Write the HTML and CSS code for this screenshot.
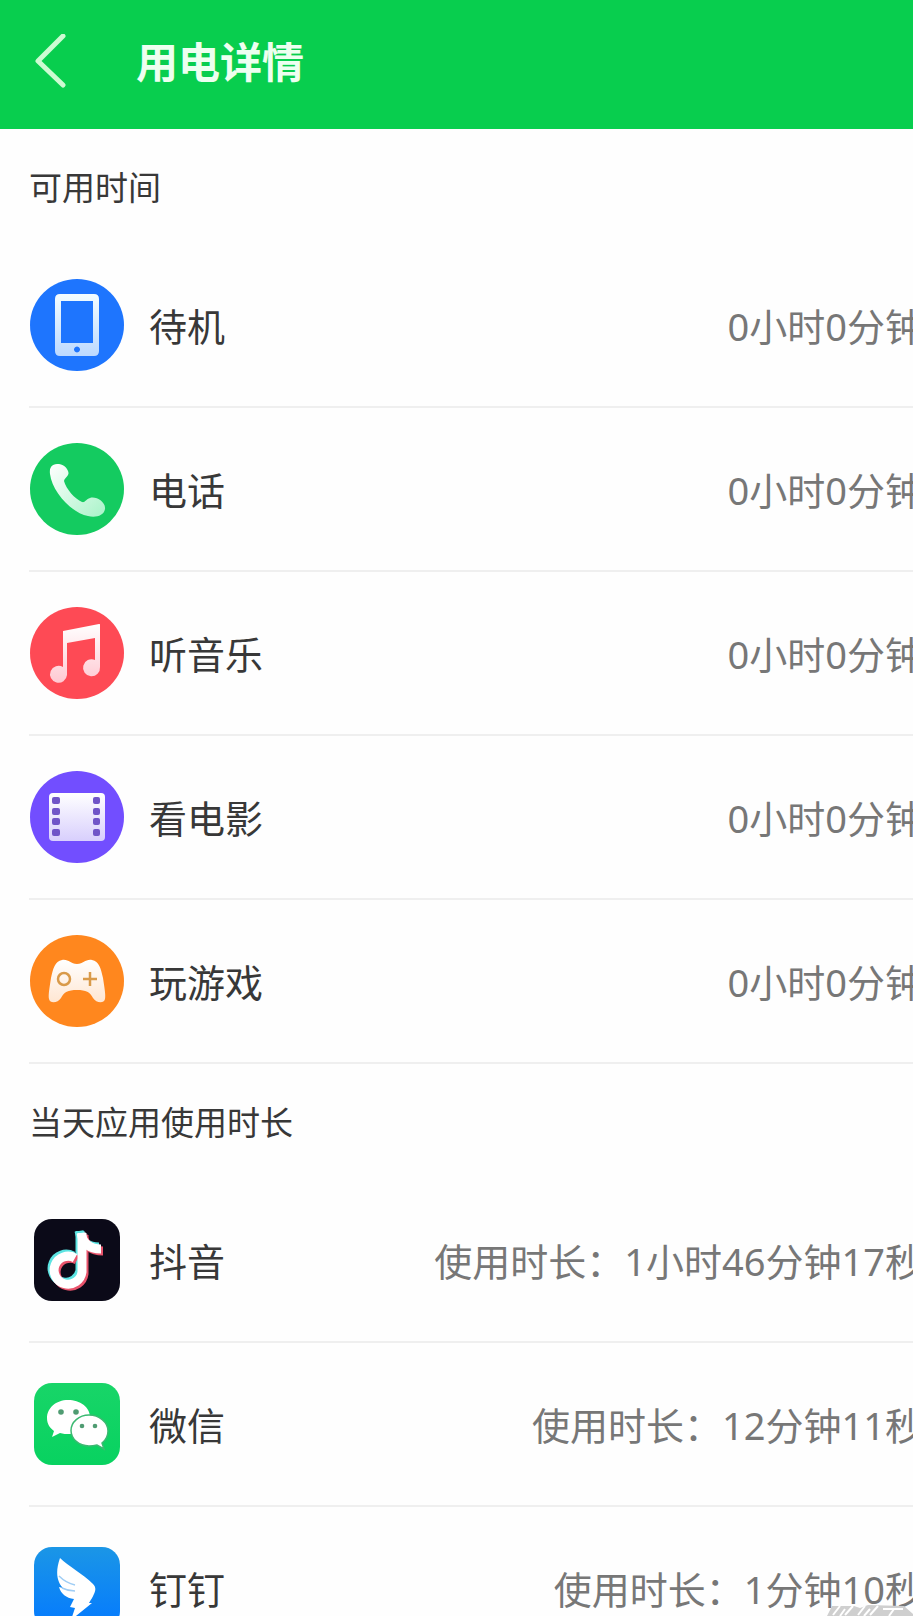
FILE: index.html
```html
<!DOCTYPE html>
<html lang="zh-CN">
<head>
<meta charset="utf-8">
<meta name="viewport" content="width=device-width, initial-scale=1">
<title>用电详情</title>
<link rel="stylesheet" href="styles.css">
</head>
<body>
<header class="topbar">
  <button class="back" type="button" aria-label="返回">
    <svg class="back-icon" viewBox="0 0 32 56" aria-hidden="true"><path d="M29 2 4 27 29 51"/></svg>
  </button>
  <h1 class="title">用电详情</h1>
</header>
<main class="content">
  <section>
    <h2 class="section-title">可用时间</h2>
    <ul class="list">
      <li class="row">
        <svg class="icon" viewBox="0 0 96 96" aria-hidden="true">
          <defs><linearGradient id="g-phone" x1="0" y1="0" x2="0" y2="1"><stop offset="0" stop-color="#f4fdff"/><stop offset="1" stop-color="#bcd9ff"/></linearGradient></defs>
          <ellipse cx="48" cy="48" rx="47" ry="46" fill="#1e75fe"/>
          <path fill="url(#g-phone)" fill-rule="evenodd" d="M31 17h34q5 0 5 5v52q0 5-5 5H31q-5 0-5-5V22q0-5 5-5zM32 24v42h32V24zM48 69.500a3 3 0 1 0 .01 0z"/>
        </svg>
        <span class="name">待机</span><span class="value">0小时0分钟</span>
      </li>
      <li class="row">
        <svg class="icon" viewBox="0 0 96 96" aria-hidden="true">
          <defs><linearGradient id="g-call" x1="0" y1="0" x2="1" y2="1"><stop offset="0" stop-color="#fff"/><stop offset="1" stop-color="#a8f3c8"/></linearGradient></defs>
          <ellipse cx="48" cy="48" rx="47" ry="46" fill="#14cb60"/>
          <path fill="url(#g-call)" d="M21 33C20 25 24 23 30 23c7 1 11 8 9 11-1 2-4 4-4 6 2 8 11 18 18 21 3 1 4-3 8-4 6-2 16 4 15 11-1 7-10 9-17 7C42 72 23 50 21 33z"/>
        </svg>
        <span class="name">电话</span><span class="value">0小时0分钟</span>
      </li>
      <li class="row">
        <svg class="icon" viewBox="0 0 96 96" aria-hidden="true">
          <defs><linearGradient id="g-music" x1="0" y1="0" x2="0" y2="1"><stop offset="0" stop-color="#fff"/><stop offset="1" stop-color="#ffc9d2"/></linearGradient></defs>
          <ellipse cx="48" cy="48" rx="47" ry="46" fill="#fe4a55"/>
          <path fill="url(#g-music)" d="M34 26 70 19c1 0 1 0 1 1v42a8.500 8.500 0 1 1-5-7V33l-28 5v32a8.500 8.500 0 1 1-4-8z"/>
        </svg>
        <span class="name">听音乐</span><span class="value">0小时0分钟</span>
      </li>
      <li class="row">
        <svg class="icon" viewBox="0 0 96 96" aria-hidden="true">
          <defs><linearGradient id="g-film" x1="0" y1="0" x2="0" y2="1"><stop offset="0" stop-color="#fff"/><stop offset="1" stop-color="#d8cffd"/></linearGradient></defs>
          <ellipse cx="48" cy="48" rx="47" ry="46" fill="#724eff"/>
          <rect x="20" y="24" width="56" height="48" rx="4" fill="url(#g-film)"/>
          <g fill="#7055c8"><rect x="23" y="28" width="8" height="7" rx="2"/><rect x="23" y="39" width="8" height="7" rx="2"/><rect x="23" y="49" width="8" height="7" rx="2"/><rect x="23" y="60" width="8" height="7" rx="2"/><rect x="64" y="28" width="7" height="7" rx="2"/><rect x="64" y="39" width="7" height="7" rx="2"/><rect x="64" y="49" width="7" height="7" rx="2"/><rect x="64" y="60" width="7" height="7" rx="2"/></g>
        </svg>
        <span class="name">看电影</span><span class="value">0小时0分钟</span>
      </li>
      <li class="row">
        <svg class="icon" viewBox="0 0 96 96" aria-hidden="true">
          <defs><linearGradient id="g-game" x1="0" y1="0" x2="0" y2="1"><stop offset="0" stop-color="#fff"/><stop offset="1" stop-color="#ffe6d2"/></linearGradient></defs>
          <ellipse cx="48" cy="48" rx="47" ry="46" fill="#ff871e"/>
          <path fill="url(#g-game)" d="M33 27c7-1 8 4 15 4s8-5 15-4c7 1 9 9 11 18 1 7 3 17 2 21-1 5-9 4-12-1-3-6-7-8-16-8s-13 2-16 8c-3 5-11 6-12 1-1-4 1-14 2-21 2-9 4-17 11-18z"/>
          <g fill="none" stroke="#d99a4a" stroke-width="2.500"><circle cx="35" cy="46" r="6"/><path d="M61 39v14M54 46h14"/></g>
        </svg>
        <span class="name">玩游戏</span><span class="value">0小时0分钟</span>
      </li>
    </ul>
  </section>
  <section>
    <h2 class="section-title">当天应用使用时长</h2>
    <ul class="list">
      <li class="row">
        <svg class="icon" viewBox="0 0 96 96" aria-hidden="true">
          <rect x="5" y="7" width="86" height="82" rx="18" fill="#0b0a18"/>
          <g fill="none" stroke-width="9">
            <g stroke="#5ce4e2"><path d="M44 44A14 14 0 1 0 51 58V19"/><path d="M50 19c2 11 9 16 20 16"/></g>
            <g stroke="#e8536b" transform="translate(4 4)"><path d="M44 44A14 14 0 1 0 51 58V19"/><path d="M50 19c2 11 9 16 20 16"/></g>
            <g stroke="#fff" transform="translate(2 2)"><path d="M44 44A14 14 0 1 0 51 58V19"/><path d="M50 19c2 11 9 16 20 16"/></g>
          </g>
        </svg>
        <span class="name">抖音</span><span class="value">使用时长：1小时46分钟17秒</span>
      </li>
      <li class="row">
        <svg class="icon" viewBox="0 0 96 96" aria-hidden="true">
          <defs><linearGradient id="g-chat" x1="0" y1="0" x2="0" y2="1"><stop offset="0" stop-color="#18d568"/><stop offset="1" stop-color="#08d260"/></linearGradient></defs>
          <rect x="5" y="7" width="86" height="82" rx="18" fill="url(#g-chat)"/>
          <path fill="#fff" d="M39 24c-12 0-21 8-21 18 0 6 3 10 7 13l-2 6 8-4c3 1 6 1 10 1 11 0 20-7 20-17s-10-17-22-17z"/>
          <path fill="#fff" stroke="#3cb972" stroke-width="1.500" d="M60 39c-10 0-18 7-18 15.500S50 70 60 70c3 0 6-.5 8-1l7 4-2-6c4-3 6-7 6-12 0-9-9-16-19-16z"/>
          <g fill="#4f9c72"><circle cx="32" cy="36" r="2.800"/><circle cx="47" cy="36" r="2.800"/><circle cx="53" cy="50" r="2.300"/><circle cx="66" cy="50" r="2.300"/></g>
        </svg>
        <span class="name">微信</span><span class="value">使用时长：12分钟11秒</span>
      </li>
      <li class="row">
        <svg class="icon" viewBox="0 0 96 96" aria-hidden="true">
          <defs><linearGradient id="g-ding" x1="0" y1="0" x2="0" y2="1"><stop offset="0" stop-color="#1b96e6"/><stop offset="1" stop-color="#0479ff"/></linearGradient></defs>
          <rect x="5" y="7" width="86" height="82" rx="18" fill="url(#g-ding)"/>
          <path fill="#fff" d="M31 18c8 8 23 16 33 26 4 4 3 8-4 19h3L42 80l4-12-5-1 4-8c-8-1-13-5-15-12l4 1c-6-6-8-16-3-30z"/>
          <path fill="none" stroke="#9fcdf5" stroke-width="1.500" d="M30 36q7 7 16 9M33 48q6 3 13 3"/>
        </svg>
        <span class="name">钉钉</span><span class="value">使用时长：1分钟10秒</span>
      </li>
    </ul>
  </section>
</main>
<svg class="corner-mark" viewBox="0 0 90 12" aria-hidden="true">
  <path fill="#cfcfcf" d="M4 12 9 2h22l6 2 8-3 36 1 9 8v2z"/>
  <path fill="none" stroke="#fff" stroke-width="2" d="M17 2l-7 9M22 5l-5 7M30 2l-8 9M42 2l-7 9M47 5l-6 7M55 2l-8 9M60 5h20M71 5l-5 7"/>
</svg>
</body>
</html>
```
FILE: styles.css
```css
* { box-sizing: border-box; }
html { height: 100%; overflow: hidden; }
body {
  height: 100%;
  margin: 0;
  overflow: hidden;
  background: #fefefe;
  color: #383838;
  font-family: "Noto Sans", "Noto Sans CJK SC", sans-serif;
}
.topbar {
  display: flex;
  align-items: center;
  height: 129px;
  padding: 0 34px 6px;
  background: #08ce4e;
  color: #edfff0;
}
.back {
  display: flex;
  width: 102px;
  padding: 0;
  border: 0;
  background: none;
}
.back-icon { width: 32px; height: 56px; fill: none; stroke: #cdfbd2; stroke-width: 5; stroke-linecap: round; stroke-linejoin: round; }
.title { margin: 0; font-size: 42px; line-height: 60px; font-weight: 700; }
.content { padding-left: 29px; }
.section-title {
  height: 115px;
  margin: 0;
  padding-top: 36px;
  font-size: 33px;
  line-height: 46px;
  font-weight: 400;
}
.list { margin: 0; padding: 0; list-style: none; }
.row {
  display: flex;
  align-items: center;
  height: 164px;
  border-bottom: 2px solid #efefef;
}
.icon { flex: none; width: 96px; height: 96px; }
.name,
.value {
  padding-top: 2px;
  font-size: 38px;
  line-height: 54px;
  white-space: nowrap;
}
.name { margin-left: 24px; }
/* Durations run slightly past the right edge of the window */
.value {
  margin-left: auto;
  margin-right: -10px;
  color: #777;
}
.corner-mark {
  position: fixed;
  right: 0;
  bottom: 0;
  width: 90px;
  height: 12px;
}
```
